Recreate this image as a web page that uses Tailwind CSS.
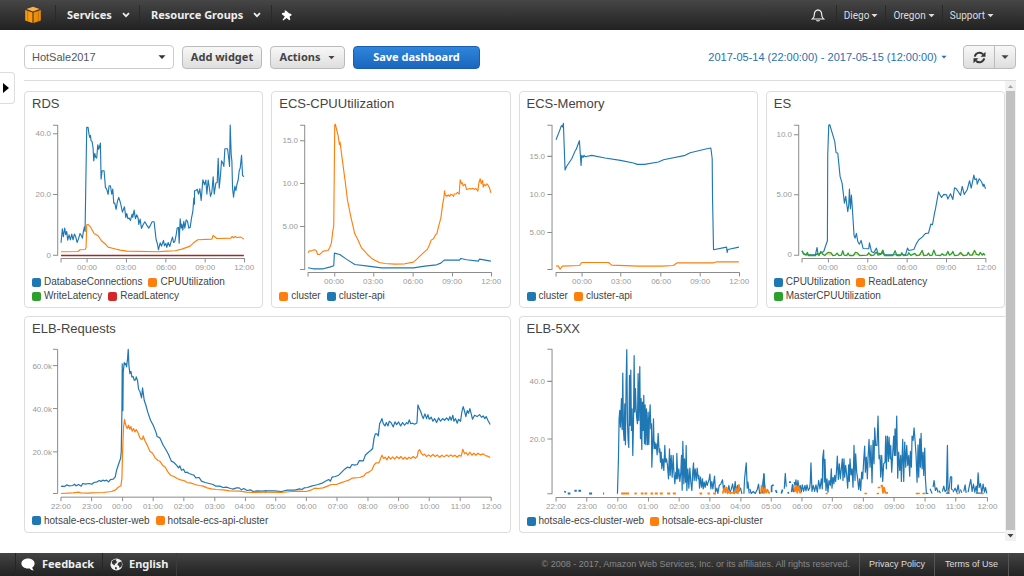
<!DOCTYPE html>
<html lang="en">
<head>
<meta charset="utf-8">
<meta name="viewport" content="width=device-width, initial-scale=1">
<title>HotSale2017 dashboard</title>
<script src="https://cdn.jsdelivr.net/npm/@tailwindcss/browser@4"></script>
</head>
<body class="relative flex min-h-screen flex-col bg-white font-['Liberation_Sans',Arial,sans-serif] text-[#444]">

<!-- Shared shapes -->
<svg class="hidden" aria-hidden="true">
  <defs>
    <symbol id="chevron" viewBox="0 0 8 8"><path d="M1 2.2 4 5.2 7 2.2" fill="none" stroke="currentColor" stroke-width="1.7"/></symbol>
    <symbol id="caret" viewBox="0 0 8 8"><path d="M.5 2.2h7L4 6z" fill="currentColor"/></symbol>
  </defs>
</svg>

<header class="flex h-[30px] items-center bg-linear-to-b from-[#464646] to-[#222] text-[#eee]">
  <a href="#" aria-label="Home" class="flex h-5 w-14 items-center border-r border-[#292929] pl-6">
    <svg class="h-[18px] w-[18px]" viewBox="0 0 18 18">
      <path d="M9 .8 15.6 3 9 5.4 2.4 3z" fill="#ffb13d"/>
      <path d="M1.2 4 8.5 6.4v10.5L1.2 14.4z" fill="#fb9a10"/>
      <path d="M16.8 4 9.5 6.4v10.5l7.3-2.5z" fill="#f08c05"/>
      <path d="M3.7 4.8v10.5M14.3 4.8v10.5" stroke="#b36300" stroke-width=".7"/>
    </svg>
  </a>
  <nav class="flex h-5 items-center font-['Noto_Sans',sans-serif] text-[11px] font-bold">
    <button class="flex h-5 w-[84px] items-center justify-between border-r border-[#292929] pr-[9px] pl-[11px]">Services <svg class="h-2 w-2"><use href="#chevron"/></svg></button>
    <button class="flex h-5 w-[132px] items-center justify-between border-r border-[#292929] pr-[10px] pl-[11px]">Resource Groups <svg class="h-2 w-2"><use href="#chevron"/></svg></button>
    <button aria-label="Pin shortcuts" class="flex h-5 w-7 items-center justify-center">
      <svg class="h-[11px] w-[11px]" viewBox="0 0 11 11"><path d="M3.600.6 4.800.5 8 3.300l2.300.7.300 1.200-2 1.200.7 3.200-1 .7L5.600 8 2.200 10.500l-.7-.6L3.800 6.500.8 4.200l.4-1.100 2-.3.8-.9z" fill="#fff"/></svg>
    </button>
  </nav>
  <nav class="ml-auto flex h-5 items-center font-['Roboto','Liberation_Sans',sans-serif] text-[10px] text-[#ddd]">
    <button aria-label="Notifications" class="flex h-5 w-9 items-center justify-center border-r border-[#292929]">
      <svg class="h-[14px] w-[14px]" viewBox="0 0 14 14" fill="none" stroke="#eee" stroke-width="1.200"><path d="M7 1.200v1M1.400 11h11.200c-1.300-1-1.900-2-1.900-4.200C10.700 4 9.400 2.200 7 2.200S3.300 4 3.300 6.800C3.300 9 2.700 10 1.400 11zM5.500 12.300c.5.900 2.500.9 3 0"/></svg>
    </button>
    <button class="flex h-5 items-center gap-[2px] border-r border-[#292929] px-[7px]">Diego <svg class="h-[7px] w-[7px]"><use href="#caret"/></svg></button>
    <button class="flex h-5 items-center gap-[2px] border-r border-[#292929] px-[7px]">Oregon <svg class="h-[7px] w-[7px]"><use href="#caret"/></svg></button>
    <button class="mr-[23px] flex h-5 items-center gap-[2px] px-[7px]">Support <svg class="h-[7px] w-[7px]"><use href="#caret"/></svg></button>
  </nav>
</header>

<button aria-label="Open navigation" class="absolute top-[72px] left-0 flex h-8 w-[15px] items-center rounded-r border border-l-0 border-[#ddd] bg-white pl-[3px]">
  <svg class="h-[10px] w-[6px]" viewBox="0 0 6 10"><path d="M0 0v10l6-5z" fill="#000"/></svg>
</button>

<main class="flex flex-1 flex-col">
  <div class="mr-2 ml-6 flex h-[51px] items-center gap-2 border-b border-[#ddd] pt-1 font-['Noto_Sans',sans-serif] text-[11px] font-bold">
    <div class="relative w-[150px]">
      <select id="dash" aria-label="Dashboard" class="block h-6 w-full appearance-none rounded-sm border border-[#ccc] bg-white py-0 pr-5 pl-[7px] font-['Liberation_Sans',Arial,sans-serif] text-[11px] leading-5 font-normal text-[#555]"><option>HotSale2017</option></select>
      <svg class="pointer-events-none absolute top-2 right-2 h-2 w-2 text-[#333]"><use href="#caret"/></svg>
    </div>
    <button class="h-[23px] w-20 rounded-sm border border-[#bbb] bg-linear-to-b from-[#f8f8f8] to-[#dedede]">Add widget</button>
    <button class="flex h-[23px] w-[75px] items-center justify-center gap-2 rounded-sm border border-[#bbb] bg-linear-to-b from-[#f8f8f8] to-[#dedede]">Actions <svg class="h-[7px] w-[7px]"><use href="#caret"/></svg></button>
    <button class="h-[23px] w-[127px] rounded-sm border border-[#1a5fae] bg-linear-to-b from-[#2f85dd] to-[#1a66bd] text-white">Save dashboard</button>
    <button class="ml-auto flex items-center gap-1 font-['Liberation_Sans',Arial,sans-serif] text-[11px] font-normal text-[#2a6fb0]">2017-05-14 (22:00:00) - 2017-05-15 (12:00:00) <svg class="h-[6px] w-[6px]"><use href="#caret"/></svg></button>
    <div class="ml-2 flex h-6 w-[53px] rounded-sm border border-[#bbb] bg-linear-to-b from-[#f8f8f8] to-[#dedede]">
      <button aria-label="Refresh" class="flex flex-1 items-center justify-center border-r border-[#bbb]">
        <svg class="h-[13px] w-[13px]" viewBox="0 0 13 13"><path d="M1.800 5.600A4.800 4.800 0 0 1 10 3.200M11.200 7.400A4.800 4.800 0 0 1 3 9.800" fill="none" stroke="#333" stroke-width="2"/><path d="M12.500.8v4.900H7.600zM.5 12.200V7.300h4.900z" fill="#333"/></svg>
      </button>
      <button aria-label="Refresh options" class="flex w-5 items-center justify-center"><svg class="h-2 w-2"><use href="#caret"/></svg></button>
    </div>
  </div>

  <div class="mr-2 ml-6 flex">
    <div class="grid flex-1 grid-cols-4 gap-2 pt-[10px] pb-2">

      <section class="rounded-sm border border-[#ddd]">
        <h2 class="px-[7px] pt-[3px] text-[13px] leading-[18px]">RDS</h2>
        <svg class="block w-full" viewBox="25 113 237 162" role="img" aria-label="RDS chart">
          <g transform="translate(20 88) scale(.33333)" fill="none" stroke-linejoin="round" stroke-width="3.400">
            <path d="M99 112H113V501H99M99 137H113M99 319H113M123 523V511H673V523M201 511V523M319 511V523M437 511V523M555 511V523" stroke="#8c8c8c" stroke-width="3"/>
            <polyline stroke="#1f77b4" points="123,464 127,422 130,446 134,420 137,440 140,430 143,456 147,440 151,455 155,438 159,455 163,438 167,446 171,463 176,450 180,436 184,443 187,450 190,430 193,416 195,430 197,300 200,118 204,118 207,140 209,148 211,142 213,158 216,160 219,180 221,219 224,196 227,208 230,210 233,170 236,184 241,165 243,273 246,248 252,248 256,298 260,304 264,319 267,293 271,293 275,318 278,303 281,345 284,345 288,364 292,340 296,328 301,344 307,372 313,356 317,388 320,376 323,391 327,390 331,397 336,378 338,388 342,366 346,392 350,380 354,390 356,409 360,393 364,421 369,410 374,401 380,411 386,420 391,411 396,401 402,401 404,420 408,455 411,464 413,473 415,485 420,464 424,474 430,457 433,473 437,466 440,478 444,463 449,475 453,460 457,447 460,463 464,460 468,440 471,420 475,418 477,465 480,392 483,420 485,408 488,426 491,400 494,420 498,395 502,400 506,420 510,418 514,390 518,370 521,330 523,348 523,308 527,308 531,303 535,318 539,302 543,337 546,300 548,275 553,290 557,276 560,318 564,276 568,302 571,325 575,312 579,266 582,318 587,285 591,283 594,211 597,300 601,260 604,218 608,225 611,235 614,182 622,182 626,215 628,235 630,111 633,200 635,218 637,300 640,327 644,294 647,308 650,290 654,275 657,248 660,240 664,202 667,262 671,266"/>
            <polyline stroke="#ff7f0e" points="123,491 174,490 180,485 195,484 198,478 200,410 204,409 212,418 222,436 234,443 244,458 258,470 264,477 280,481 300,486 320,489 412,491 440,489 465,488 485,483 510,474 520,464 533,455 575,453 579,442 590,451 600,451 632,450 636,445 640,449 645,445 650,448 662,447 671,453"/>
            <path d="M123 502H671" stroke="#a02c22" stroke-width="5"/>
          </g>
          <g font-size="8" fill="#999">
            <g text-anchor="end"><text x="51" y="136">40.0</text><text x="51" y="197">20.0</text><text x="51" y="258">0</text></g>
            <g text-anchor="middle"><text x="87" y="270">00:00</text><text x="126" y="270">03:00</text><text x="166" y="270">06:00</text><text x="205" y="270">09:00</text><text x="244" y="270">12:00</text></g>
          </g>
        </svg>
        <ul class="flex flex-wrap gap-x-[6px] px-[7px] pb-1 text-[10px] leading-[14px]">
          <li class="flex items-center gap-[3px]"><i class="h-[9px] w-[9px] rounded-xs bg-[#1f77b4]"></i>DatabaseConnections</li>
          <li class="flex items-center gap-[3px]"><i class="h-[9px] w-[9px] rounded-xs bg-[#ff7f0e]"></i>CPUUtilization</li>
          <li class="flex items-center gap-[3px]"><i class="h-[9px] w-[9px] rounded-xs bg-[#2ca02c]"></i>WriteLatency</li>
          <li class="flex items-center gap-[3px]"><i class="h-[9px] w-[9px] rounded-xs bg-[#d62728]"></i>ReadLatency</li>
        </ul>
      </section>

      <section class="rounded-sm border border-[#ddd]">
        <h2 class="px-[7px] pt-[3px] text-[13px] leading-[18px]">ECS-CPUUtilization</h2>
        <svg class="block w-full" viewBox="272 113 237 176" role="img" aria-label="ECS CPU utilization chart">
          <g transform="translate(268 88) scale(.33333)" fill="none" stroke-linejoin="round" stroke-width="3.400">
            <path d="M96 112H110V544H96M96 158H110M96 286H110M96 415H110M120 565V553H670V565M200 553V565M317 553V565M435 553V565M553 553V565" stroke="#8c8c8c" stroke-width="3"/>
            <polyline stroke="#1f77b4" points="120,539 135,542 165,542 185,537 197,533 199,495 215,499 235,513 260,529 300,534 340,539 436,539 470,534 505,530 518,525 528,516 574,516 578,511 595,515 630,519 634,513 668,519"/>
            <polyline stroke="#ff7f0e" points="120,494 124,488 130,489 135,486 140,485 144,487 149,499 155,499 160,494 165,489 180,487 185,478 190,465 194,430 197,415 200,110 202,109 206,126 210,142 214,170 216,162 220,195 226,240 232,285 238,335 248,385 260,437 268,452 280,479 290,490 298,499 310,510 320,516 334,523 350,526 380,528 410,527 436,522 446,513 456,503 468,492 478,483 484,470 489,456 496,452 502,440 506,437 512,412 518,390 524,345 527,330 529,308 531,320 536,325 540,320 544,325 548,319 552,320 556,325 558,318 564,317 568,313 573,318 576,275 580,287 582,284 585,293 591,288 595,304 600,303 605,301 608,303 614,301 618,304 623,301 629,309 632,284 636,272 639,287 643,277 645,297 648,289 652,293 656,287 660,292 664,300 668,314"/>
          </g>
          <g font-size="8" fill="#999">
            <g text-anchor="end"><text x="298" y="143">15.0</text><text x="298" y="186">10.0</text><text x="298" y="229">5.00</text></g>
            <g text-anchor="middle"><text x="334" y="284">00:00</text><text x="373" y="284">03:00</text><text x="413" y="284">06:00</text><text x="452" y="284">09:00</text><text x="491" y="284">12:00</text></g>
          </g>
        </svg>
        <ul class="flex flex-wrap gap-x-[6px] px-[7px] pb-1 text-[10px] leading-[14px]">
          <li class="flex items-center gap-[3px]"><i class="h-[9px] w-[9px] rounded-xs bg-[#ff7f0e]"></i>cluster</li>
          <li class="flex items-center gap-[3px]"><i class="h-[9px] w-[9px] rounded-xs bg-[#1f77b4]"></i>cluster-api</li>
        </ul>
      </section>

      <section class="rounded-sm border border-[#ddd]">
        <h2 class="px-[7px] pt-[3px] text-[13px] leading-[18px]">ECS-Memory</h2>
        <svg class="block w-full" viewBox="520 113 237 176" role="img" aria-label="ECS memory chart">
          <g transform="translate(515 88) scale(.33333)" fill="none" stroke-linejoin="round" stroke-width="3.400">
            <path d="M97 112H111V544H97M97 205H111M97 319H111M97 433H111M123 565V553H673V565M201 553V565M317 553V565M437 553V565M555 553V565" stroke="#8c8c8c" stroke-width="3"/>
            <polyline stroke="#1f77b4" points="123,155 134,127 139,113 142,117 145,106 150,246 154,236 170,212 181,187 183,185 193,158 198,232 200,202 204,208 207,202 210,206 230,202 270,210 316,217 355,225 366,229 388,229 430,222 445,215 510,202 525,194 575,182 587,180 591,212 592,330 595,485 634,477 636,493 638,484 671,477"/>
            <polyline stroke="#ff7f0e" points="123,533 130,534 135,543 142,534 193,532 200,523 280,523 290,531 370,534 440,534 475,532 486,524 595,524 605,521 671,521"/>
          </g>
          <g font-size="8" fill="#999">
            <g text-anchor="end"><text x="545" y="159">15.0</text><text x="545" y="197">10.0</text><text x="545" y="235">5.00</text></g>
            <g text-anchor="middle"><text x="582" y="284">00:00</text><text x="621" y="284">03:00</text><text x="661" y="284">06:00</text><text x="700" y="284">09:00</text><text x="739" y="284">12:00</text></g>
          </g>
        </svg>
        <ul class="flex flex-wrap gap-x-[6px] px-[7px] pb-1 text-[10px] leading-[14px]">
          <li class="flex items-center gap-[3px]"><i class="h-[9px] w-[9px] rounded-xs bg-[#1f77b4]"></i>cluster</li>
          <li class="flex items-center gap-[3px]"><i class="h-[9px] w-[9px] rounded-xs bg-[#ff7f0e]"></i>cluster-api</li>
        </ul>
      </section>

      <section class="rounded-sm border border-[#ddd]">
        <h2 class="px-[7px] pt-[3px] text-[13px] leading-[18px]">ES</h2>
        <svg class="block w-full" viewBox="767 113 237 162" role="img" aria-label="ES chart">
          <g transform="translate(762 88) scale(.33333)" fill="none" stroke-linejoin="round" stroke-width="3.400">
            <path d="M96 112H110V501H96M96 140H110M96 320H110M120 523V511H671V523M199 511V523M317 511V523M435 511V523M553 511V523" stroke="#8c8c8c" stroke-width="3"/>
            <polyline stroke="#1f77b4" points="120,488 125,497 135,500 160,500 165,478 168,499 178,494 185,490 190,475 196,458 197,200 200,112 203,110 209,130 218,160 222,194 227,195 234,265 240,285 243,310 247,345 251,325 257,371 260,350 262,303 265,362 268,321 271,365 276,443 279,450 283,436 287,460 292,468 297,457 303,481 320,482 322,464 328,490 335,494 343,480 347,495 360,497 362,488 366,500 430,500 436,480 440,487 455,484 462,468 470,455 480,447 490,436 499,435 506,408 511,410 517,375 520,362 524,340 529,311 532,318 538,328 545,319 553,320 557,333 565,317 572,334 577,299 583,303 587,309 595,322 600,295 606,319 615,305 622,278 627,300 635,261 638,275 643,272 645,288 651,272 658,281 663,295 665,288 670,302"/>
            <path stroke="#ffb86b" d="M196 500H210M275 500H290M315 500H330M470 500H482M590 500H602M630 500H642"/>
            <polyline stroke="#2ca02c" stroke-width="4" points="120,488 124,497 132,501 136,493 139,502 160,502 166,496 171,502 176,490 182,498 188,502 194,496 200,493 207,494 212,502 220,501 225,495 230,502 238,501 242,488 246,501 254,502 258,495 262,502 274,502 280,493 286,494 292,502 315,501 320,494 326,502 335,501 342,492 348,501 356,499 362,486 367,502 392,502 399,488 404,502 415,502 419,494 424,502 436,501 440,494 446,502 458,496 463,502 472,501 480,487 485,502 495,501 499,495 503,502 510,501 515,486 521,501 535,502 540,497 545,501 552,501 557,490 562,501 568,497 572,490 577,502 588,501 595,493 603,502 614,501 618,493 623,501 630,501 637,487 643,499 650,501 654,493 660,501 664,496 668,502"/>
          </g>
          <g font-size="8" fill="#999">
            <g text-anchor="end"><text x="792" y="137">10.0</text><text x="792" y="197">5.00</text><text x="792" y="257">0</text></g>
            <g text-anchor="middle"><text x="828" y="270">00:00</text><text x="867" y="270">03:00</text><text x="907" y="270">06:00</text><text x="946" y="270">09:00</text><text x="986" y="270">12:00</text></g>
          </g>
        </svg>
        <ul class="flex flex-wrap gap-x-[6px] px-[7px] pb-1 text-[10px] leading-[14px]">
          <li class="flex items-center gap-[3px]"><i class="h-[9px] w-[9px] rounded-xs bg-[#1f77b4]"></i>CPUUtilization</li>
          <li class="flex items-center gap-[3px]"><i class="h-[9px] w-[9px] rounded-xs bg-[#ff7f0e]"></i>ReadLatency</li>
          <li class="flex items-center gap-[3px]"><i class="h-[9px] w-[9px] rounded-xs bg-[#2ca02c]"></i>MasterCPUUtilization</li>
        </ul>
      </section>

      <section class="col-span-2 rounded-sm border border-[#ddd]">
        <h2 class="px-[7px] pt-[3px] text-[13px] leading-[18px]">ELB-Requests</h2>
        <svg class="block w-full" viewBox="25 338 485 176" role="img" aria-label="ELB requests chart">
          <g transform="translate(20 312) scale(.33333)" fill="none" stroke-linejoin="round" stroke-width="3.600">
            <path d="M99 112H113V545H99M99 161H113M99 290H113M99 420H113M123 568V556H1415V568M215 556V568M308 556V568M400 556V568M492 556V568M585 556V568M677 556V568M768 556V568M860 556V568M952 556V568M1045 556V568M1137 556V568M1229 556V568M1322 556V568" stroke="#8c8c8c" stroke-width="3"/>
            <polyline stroke="#1f77b4" points="123,524 128,523 134,524 140,519 148,522 158,521 164,517 168,522 176,518 184,523 188,515 196,517 206,515 216,517 222,512 232,510 238,506 243,509 248,505 254,507 260,505 266,510 272,503 280,502 286,495 290,475 295,460 299,448 302,440 304,420 306,300 307,156 309,296 310,180 313,152 316,158 318,155 320,165 323,140 325,112 327,160 330,185 333,178 336,195 340,194 343,205 347,204 349,195 353,206 356,232 360,238 365,258 368,228 373,265 378,280 384,302 392,325 400,340 408,360 412,374 420,378 430,400 438,413 446,428 454,447 462,452 470,460 476,468 480,462 485,475 491,472 496,482 502,481 508,485 516,488 522,490 528,498 538,497 545,508 556,512 568,515 580,518 588,523 600,523 610,527 620,526 632,530 640,532 650,528 658,528 665,534 672,530 682,536 692,534 700,539 712,537 725,538 740,537"/>
            <polyline stroke="#ff7f0e" points="123,545 160,543 176,541 182,543 205,544 215,543 250,542 275,539 287,534 294,527 303,522 306,500 308,420 311,345 314,322 317,338 322,350 326,340 330,352 333,344 337,358 341,350 345,360 349,353 354,362 360,378 364,382 368,382 370,372 375,386 383,402 390,418 398,424 406,438 414,446 420,448 428,460 436,466 444,480 452,490 462,494 472,500 482,504 492,506 502,512 514,514 526,518 538,521 550,523 562,528 575,531 590,533 610,534 630,537 660,538 680,541 700,542 740,541"/>
          </g>
          <g transform="translate(265 312) scale(.33333)" fill="none" stroke-linejoin="round" stroke-width="3.600">
            <polyline stroke="#1f77b4" points="0,537 30,537 50,539 68,535 90,535 104,531 112,533 119,528 128,527 140,523 148,521 160,518 172,514 182,508 192,503 197,508 202,496 212,494 222,490 232,480 240,472 248,466 256,468 262,458 270,460 278,458 284,446 296,447 302,430 308,424 318,416 324,410 328,380 332,366 337,366 341,372 345,335 348,330 352,320 356,335 361,342 365,332 370,342 374,328 380,333 386,345 391,330 396,338 402,330 408,342 414,332 420,340 426,332 430,336 434,324 438,335 444,334 450,337 457,333 460,279 464,290 468,298 472,310 476,320 481,306 486,320 490,308 494,322 500,316 505,328 510,320 516,332 522,318 528,328 534,320 540,325 546,318 552,325 556,314 560,325 565,310 568,328 573,320 578,334 582,322 588,328 592,300 596,284 600,298 604,314 608,296 612,304 616,290 620,306 624,322 630,310 638,314 645,308 651,316 656,312 661,320 665,314 670,325 677,338"/>
            <polyline stroke="#ff7f0e" points="0,541 50,542 80,539 100,538 125,539 138,535 150,529 160,530 175,528 190,522 200,518 215,518 228,513 240,509 252,505 262,499 285,497 298,492 304,484 314,480 322,474 328,460 334,453 343,453 348,440 352,430 357,440 362,436 367,444 372,434 378,442 384,435 390,442 396,434 403,440 409,434 415,442 421,436 427,442 433,436 439,440 446,434 452,439 458,434 461,418 465,413 470,424 475,430 480,427 486,434 492,429 498,434 505,428 512,434 518,429 525,436 532,430 539,435 546,429 552,434 559,429 565,434 571,430 578,436 584,430 590,433 595,412 600,426 605,422 610,430 616,421 622,430 628,424 634,430 640,424 648,429 656,426 664,432 670,433 677,437"/>
          </g>
          <g font-size="8" fill="#999">
            <g text-anchor="end"><text x="52" y="369">60.0k</text><text x="52" y="412">40.0k</text><text x="52" y="455">20.0k</text></g>
            <g text-anchor="middle"><text x="61" y="509">22:00</text><text x="92" y="509">23:00</text><text x="122" y="509">00:00</text><text x="153" y="509">01:00</text><text x="184" y="509">02:00</text><text x="215" y="509">03:00</text><text x="245" y="509">04:00</text><text x="276" y="509">05:00</text><text x="307" y="509">06:00</text><text x="338" y="509">07:00</text><text x="368" y="509">08:00</text><text x="399" y="509">09:00</text><text x="430" y="509">10:00</text><text x="461" y="509">11:00</text><text x="492" y="509">12:00</text></g>
          </g>
        </svg>
        <ul class="flex flex-wrap gap-x-[6px] px-[7px] pb-1 text-[10px] leading-[14px]">
          <li class="flex items-center gap-[3px]"><i class="h-[9px] w-[9px] rounded-xs bg-[#1f77b4]"></i>hotsale-ecs-cluster-web</li>
          <li class="flex items-center gap-[3px]"><i class="h-[9px] w-[9px] rounded-xs bg-[#ff7f0e]"></i>hotsale-ecs-api-cluster</li>
        </ul>
      </section>

      <section class="col-span-2 rounded-l-sm border border-r-0 border-[#ddd]">
        <h2 class="px-[7px] pt-[3px] text-[13px] leading-[18px]">ELB-5XX</h2>
        <svg class="block w-full" viewBox="520 338 485 176" role="img" aria-label="ELB 5XX chart">
          <g transform="translate(515 312) scale(.33333)" fill="none" stroke-linejoin="round" stroke-width="3.600">
            <path d="M97 112H111V545H97M97 208H111M97 381H111M123 568V556H1416V568M215 556V568M308 556V568M400 556V568M492 556V568M584 556V568M677 556V568M768 556V568M860 556V568M951 556V568M1044 556V568M1136 556V568M1229 556V568M1321 556V568" stroke="#8c8c8c" stroke-width="3"/>
            <path stroke="#1f77b4" stroke-width="6" d="M149 541l2-4M158 544h8M178 536h7M190 536h8M222 544h9M264 544h3"/>
            <polyline stroke="#1f77b4" points="307,545 310,440 312,320 314,295 316,345 319,260 321,352 323,183 325,355 327,385 329,275 331,398 333,210 335,113 337,330 339,385 341,406 343,190 345,340 347,174 349,355 351,290 353,430 355,340 357,131 359,300 361,230 363,290 365,320 367,335 369,185 371,325 374,164 376,380 378,260 380,412 382,270 384,355 386,250 388,395 390,278 392,398 394,290 397,398 399,300 401,397 403,320 405,278 407,350 409,335 410,465 413,385 415,320 417,410 419,390 421,410 423,395 426,428 429,364 432,420 434,410 436,450 438,420 440,470 443,440 446,475 449,400 451,450 454,440 457,460 460,500 463,410 465,490 468,430 471,495 474,430 476,475 479,515 482,480 484,500 485,424 488,500 491,470 494,508 497,480 499,430 501,534 503,388 506,515 508,440 511,510 513,400 515,535 518,470 521,528 524,468 527,510 530,535 533,475 535,452 537,505 540,470 543,506 546,468 549,500 551,490 553,528 556,495 559,525 562,500 564,530 567,510 570,526 573,506 576,520 579,510 582,500 584,486 587,530 590,508 593,530 598,492 601,540 605,528 608,544 612,520 617,515 622,503 625,535 628,520 631,543"/>
            <polyline stroke="#1f77b4" points="636,544 641,520 644,540 648,532 652,515 656,540 660,508 663,542 667,520 671,538 676,528 680,545"/>
            <polyline stroke="#1f77b4" points="686,545 688,500 693,452 696,528 698,510 702,544"/>
            <polyline stroke="#1f77b4" points="704,530 708,544 714,538 720,544 726,532 730,516 733,544 740,540 746,485 750,540"/>
            <path stroke="#ff7f0e" stroke-width="6" d="M318 544h24M358 544h7M377 544h8M388 544h8M406 544h8M419 544h9M434 544h9M456 544h9M473 544h9M553 544h8M577 544h7M594 544h8"/>
            <polyline stroke="#ff7f0e" stroke-width="5" points="622,544 627,528 630,540 634,526 637,544 641,536 645,544 652,541 658,544 664,530 668,544 671,518 673,535"/>
            <polyline stroke="#ff7f0e" stroke-width="5" points="737,544 739,520 742,540 744,520 747,544"/>
          </g>
          <g transform="translate(762 312) scale(.33333)" fill="none" stroke-linejoin="round" stroke-width="3.600">
            <polyline stroke="#1f77b4" points="1,544 5,485 8,540"/>
            <path stroke="#1f77b4" stroke-width="5" d="M28 540V522l6-4M40 534l4 8M57 544l4-12M76 540l4 4M80 510h6M88 540l3-22 4 22M96 510l3 8"/>
            <path stroke="#1f77b4" d="M66 530l3-46 3 40"/>
            <polyline stroke="#1f77b4" points="98,522 101,503 104,530 107,505 110,528 114,520 117,540 120,518 124,538 128,520 131,536 134,518 138,535 142,528 144,510 146,452 149,538 153,520 157,538 161,518 165,540 169,505 173,530 177,500 180,530 181,440 184,414 186,510 188,442 191,535 194,500 197,540 200,505 204,520 207,470 209,528 212,496 215,515 217,490 220,508 223,470 225,432 228,502 231,455 234,500 237,470 240,440 242,505 245,440 247,495 250,460 253,488 256,528 259,458 261,508 263,440 266,488 269,470 272,525 275,400 278,505 280,425 283,480 286,500 289,532 292,500 295,535 298,480 301,500 304,445 307,402 309,480 312,435 315,500 317,440 320,382 323,465 326,400 329,512 332,385 335,455 337,347 340,400 344,400 347,312 350,440 353,430 355,495 358,430 361,508 364,455 368,450 370,372 372,470 375,372 378,448 380,375 383,440 385,400 388,480 391,425 394,372 396,430 398,350 400,430 403,312 406,498 409,420 412,475 415,430 417,508 421,382 424,508 427,390 430,465 433,400 436,460 439,430 442,492 444,418 447,465 449,372 452,385 455,347 458,385 461,430 464,510 467,398 469,495 472,380 474,465 476,364 479,470 482,420 484,490 487,408 489,500 492,544"/>
            <path stroke="#1f77b4" d="M490 544h8M503 530l6 14M512 525l3-20 4 30 4-8 4 14M530 535l4 8M540 538l4-16 4 16 4-4 3-134 2 144 4-20 3-30h5M568 495l-1 35 4 5M572 540l6-12 5 12 4-22 4 26M594 532l4 10M604 538l4-20 3 24M617 540l4-20 4-18 4 36 4-22 4 24 4-18 3 20 3-60 3 44 4-12 4 28 4-26 4 24 3-14 4 18M550 543h12M640 543h20"/>
            <path stroke="#ff7f0e" stroke-width="5" d="M0 524l4 18 4-14 4 14 3-10 5 10h3M94 522l4 16 4-18 3 22 4-20 5 22M190 544h6M306 544h8M343 544h7M346 526h8M355 522l4-2 3 22 3-16 4 16h8M460 544h12M480 544h9M556 536h6M582 544h6M656 544h8"/>
          </g>
          <g font-size="8" fill="#999">
            <g text-anchor="end"><text x="545" y="384">40.0</text><text x="545" y="442">20.0</text></g>
            <g text-anchor="middle"><text x="556" y="509">22:00</text><text x="587" y="509">23:00</text><text x="617" y="509">00:00</text><text x="648" y="509">01:00</text><text x="679" y="509">02:00</text><text x="710" y="509">03:00</text><text x="740" y="509">04:00</text><text x="771" y="509">05:00</text><text x="802" y="509">06:00</text><text x="832" y="509">07:00</text><text x="863" y="509">08:00</text><text x="894" y="509">09:00</text><text x="925" y="509">10:00</text><text x="955" y="509">11:00</text><text x="987" y="509">12:00</text></g>
          </g>
        </svg>
        <ul class="flex flex-wrap gap-x-[6px] px-[7px] pb-1 text-[10px] leading-[14px]">
          <li class="flex items-center gap-[3px]"><i class="h-[9px] w-[9px] rounded-xs bg-[#1f77b4]"></i>hotsale-ecs-cluster-web</li>
          <li class="flex items-center gap-[3px]"><i class="h-[9px] w-[9px] rounded-xs bg-[#ff7f0e]"></i>hotsale-ecs-api-cluster</li>
        </ul>
      </section>
    </div>

    <!-- Scroll bar of the widget pane -->
    <div class="flex w-[11px] flex-col bg-[#f1f1f1]" aria-hidden="true">
      <svg class="h-[10px] w-[11px]" viewBox="0 0 11 10"><path d="M3 7h5L5.500 4z" fill="#a3a3a3"/></svg>
      <div class="mx-px flex-1 bg-[#c1c1c1]"></div>
      <svg class="h-[11px] w-[11px]" viewBox="0 0 11 11"><path d="M2.500 4h6l-3 3.500z" fill="#444"/></svg>
    </div>
  </div>
</main>

<footer class="flex h-[23px] items-stretch bg-linear-to-b from-[#444] to-[#222] text-[9px] text-[#ddd]">
  <div class="ml-[15px] flex border-l border-[#262626] font-['Noto_Sans',sans-serif] text-[11px] font-bold text-[#eee]">
    <button class="flex w-[87px] items-center gap-[7px] border-r border-[#262626] pl-[5px]">
      <svg class="h-[13px] w-[14px]" viewBox="0 0 14 13"><path d="M7 .6c3.700 0 6.600 2.200 6.600 5 0 1.700-.9 3.100-2.300 4 .1 1.200.7 2.100 1.600 2.800-1.900 0-3.300-.7-4.200-1.900-.5.100-1.100.1-1.700.1-3.700 0-6.600-2.200-6.600-5S3.300.6 7 .6z" fill="#fff"/></svg>
      Feedback
    </button>
    <button class="flex w-[74px] items-center gap-[6px] border-r border-[#3c3c3c] pl-[7px]">
      <svg class="h-[13px] w-[13px]" viewBox="0 0 13 13"><circle cx="6.500" cy="6.500" r="6" fill="#f2f2f2"/><path d="M2 3.500C3 2 4.500 1.400 6.500 1.500L5.800 3l1.500.8L6 5.500l-1.500.3L5.200 7 4 7.300 1.800 5.200zM8.500 4.500l2.800-1c.9 1.500.9 3.500.2 5L9.500 10 9 8 7.300 7zM5 9l2 .6L6.500 11.500 5 11z" fill="#333"/></svg>
      English
    </button>
  </div>
  <p class="ml-auto flex items-center pr-[9px] text-[#888]">© 2008 - 2017, Amazon Web Services, Inc. or its affiliates. All rights reserved.</p>
  <a href="#" class="flex w-[75px] items-center justify-center border-l border-[#555]">Privacy Policy</a>
  <a href="#" class="mr-[15px] flex w-[75px] items-center justify-center border-x border-[#555]">Terms of Use</a>
</footer>
</body>
</html>
